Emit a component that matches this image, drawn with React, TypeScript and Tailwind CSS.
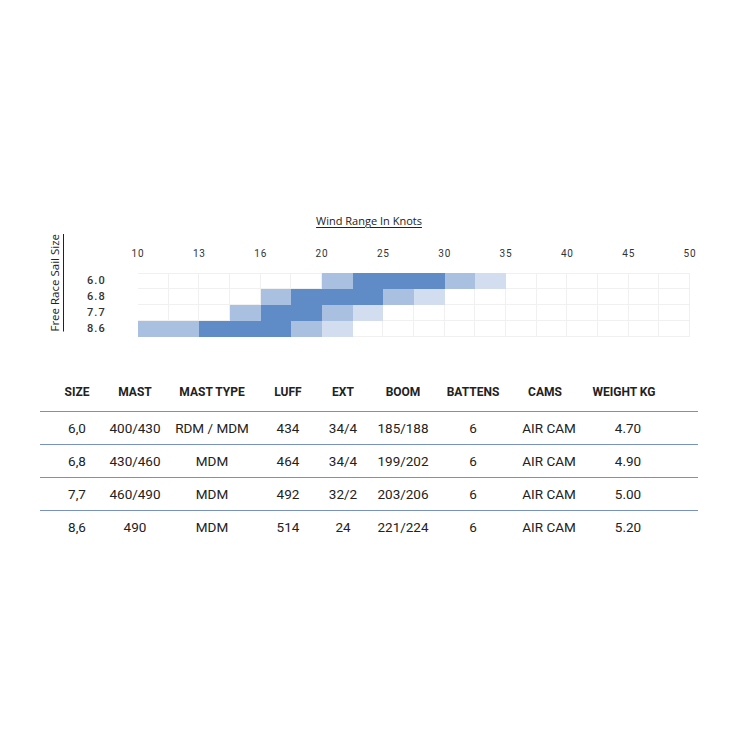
import React from "react";

const AXIS = ["10", "13", "16", "20", "25", "30", "35", "40", "45", "50"];

// m = medium, d = dark, l = light band for each 18-column row
const CHART: { size: string; cells: Record<number, "d" | "m" | "l"> }[] = [
  { size: "6.0", cells: { 6: "m", 7: "d", 8: "d", 9: "d", 10: "m", 11: "l" } },
  { size: "6.8", cells: { 4: "m", 5: "d", 6: "d", 7: "d", 8: "m", 9: "l" } },
  { size: "7.7", cells: { 3: "m", 4: "d", 5: "d", 6: "m", 7: "l" } },
  { size: "8.6", cells: { 0: "m", 1: "m", 2: "d", 3: "d", 4: "d", 5: "m", 6: "l" } },
];

const TONE = {
  d: "bg-[#5f8bc7] border-[#5f8bc7]",
  m: "bg-[#a9c0e0] border-[#a9c0e0]",
  l: "bg-[#d2ddef] border-[#d2ddef]",
};

const HEAD = ["SIZE", "MAST", "MAST TYPE", "LUFF", "EXT", "BOOM", "BATTENS", "CAMS", "WEIGHT KG"];

const ROWS = [
  ["6,0", "400/430", "RDM / MDM", "434", "34/4", "185/188", "6", "AIR CAM", "4.70"],
  ["6,8", "430/460", "MDM", "464", "34/4", "199/202", "6", "AIR CAM", "4.90"],
  ["7,7", "460/490", "MDM", "492", "32/2", "203/206", "6", "AIR CAM", "5.00"],
  ["8,6", "490", "MDM", "514", "24", "221/224", "6", "AIR CAM", "5.20"],
];

const WindChart = () => (
  <div>
    <div className="flex justify-center pr-[12px]">
      <span className="font-['Open_Sans',sans-serif] text-[11px] leading-[14px] text-[#222] underline underline-offset-2">
        Wind Range In Knots
      </span>
    </div>

    <div className="flex mt-[6px]">
      <div className="ml-[47px] w-[15px] flex items-start justify-center">
        <span className="[writing-mode:vertical-rl] rotate-180 font-['Open_Sans',sans-serif] text-[11.5px] leading-[13px] text-[#222] underline underline-offset-2 whitespace-nowrap">
          Free Race Sail Size
        </span>
      </div>

      <div className="pt-[12px]">
        <div className="ml-[45.33px] w-[613.33px] grid grid-cols-10 font-['Roboto',sans-serif] text-[10px] leading-[16px] tracking-[0.08em] text-[#333]">
          {AXIS.map((a) => (
            <span key={a} className="text-center">
              {a}
            </span>
          ))}
        </div>

        <div className="mt-[11px]">
          {CHART.map((row, r) => (
            <div key={row.size} className="flex items-center">
              <span className="ml-[25px] w-[51px] font-['Roboto',sans-serif] font-medium text-[11px] leading-[16px] tracking-[0.1em] text-[#333]">
                {row.size}
              </span>
              <div className="w-[552px] grid grid-cols-[repeat(18,1fr)]">
                {Array.from({ length: 18 }, (_, c) => {
                  const t = row.cells[c];
                  return (
                    <div
                      key={c}
                      className={`h-[16px] border-r border-b ${r === 0 ? "border-t" : ""} ${
                        t ? TONE[t] : "bg-white border-[#f0f0f0]"
                      }`}
                    />
                  );
                })}
              </div>
            </div>
          ))}
        </div>
      </div>
    </div>
  </div>
);

const COLS = "grid-cols-[74px_42px_112px_40px_70px_50px_90px_54px_104px]";

const SpecTable = () => (
  <div className="ml-[40px] w-[658px] mt-[35px] font-['Roboto',sans-serif] text-[#222]">
    <div className={`grid ${COLS} h-[40px] items-center border-b border-[#7891c2] text-[12px] font-bold`}>
      {HEAD.map((h) => (
        <div key={h} className="flex justify-center whitespace-nowrap">
          {h}
        </div>
      ))}
    </div>
    {ROWS.map((row, i) => (
      <div
        key={row[0]}
        className={`grid ${COLS} h-[33px] items-center text-[13.5px] ${
          i < ROWS.length - 1 ? "border-b border-[#7891c2]" : ""
        }`}
      >
        {row.map((v, j) => (
          <div key={j} className="flex justify-center whitespace-nowrap">
            <span className={j === 7 || j === 8 ? "pl-[8px]" : ""}>{v}</span>
          </div>
        ))}
      </div>
    ))}
  </div>
);

export default function App() {
  return (
    <div className="w-[750px] h-[750px] bg-white pt-[214px]">
      <WindChart />
      <SpecTable />
    </div>
  );
}
